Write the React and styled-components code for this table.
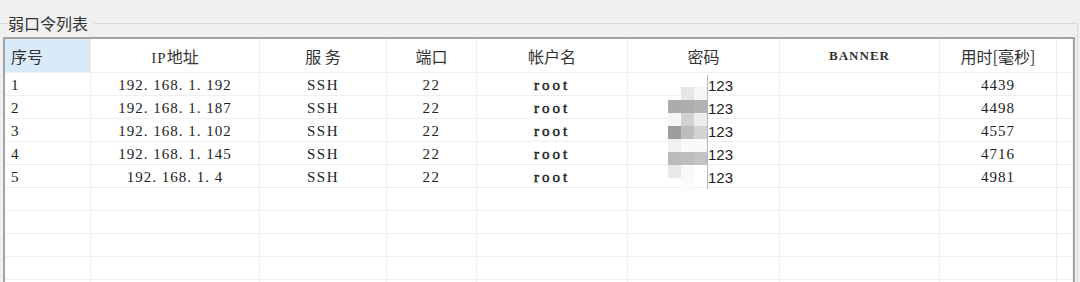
import React from "react";
import styled, { createGlobalStyle } from "styled-components";

const GlobalStyle = createGlobalStyle`
  html, body {
    margin: 0;
    padding: 0;
    background: #f0f0f0;
    overflow: hidden;
  }
  body {
    font-family: "Noto Sans CJK SC", "Noto Sans", sans-serif;
  }
`;

const COLS = "86px 169px 127px 90px 151px 152px 160px 117px 16px";

const Group = styled.fieldset`
  margin: 12px 2px 0 0;
  padding: 3px 0 0 3px;
  border: none;
  border-top: 1px solid #dadada;
  border-right: 1px solid #dadada;
  min-width: 0;
`;

const Title = styled.legend`
  padding: 0 6px 0 0;
  margin-left: 5px;
  font-size: 16px;
  line-height: 22px;
  color: #333;
`;

const TableBox = styled.div`
  position: relative;
  width: 1068px;
  background: #fff;
  border: 2px solid #a3a3a3;
  border-bottom: none;
  height: 260px;
  overflow: hidden;
`;

const Row = styled.div`
  display: grid;
  grid-template-columns: ${COLS};
  height: ${(p) => (p.$head ? "33px" : "22px")};
  border-bottom: 1px solid #efefef;
`;

const Cell = styled.div`
  display: flex;
  align-items: center;
  justify-content: ${(p) => (p.$align === "left" ? "flex-start" : "center")};
  padding-left: ${(p) => (p.$align === "left" ? "6px" : "0")};
  padding-top: ${(p) => (p.$head ? "0" : "2px")};
  border-right: 1px solid #efefef;
  background: ${(p) => (p.$active ? "#d9eaf9" : "transparent")};
  white-space: pre;
  overflow: hidden;
`;

const HeadText = styled.span`
  font-size: 16px;
  color: #333;
  font-family: "Noto Sans CJK SC", sans-serif;
`;

const Latin = styled.span`
  font-family: "Liberation Serif", serif;
  font-size: ${(p) => p.$size || 15}px;
  letter-spacing: 1px;
  font-weight: ${(p) => (p.$bold ? 700 : 400)};
  color: #333;
`;

const Mono = styled.span`
  font-family: "Liberation Serif", "DejaVu Serif", serif;
  font-size: 15px;
  letter-spacing: ${(p) => p.$gap ?? 1.5}px;
  color: #222;
  -webkit-text-stroke: ${(p) => (p.$heavy ? "0.5px #222" : "0")};
`;

const Pass = styled.span`
  font-family: "Liberation Sans", Arial, sans-serif;
  font-size: 15px;
  color: #222;
  margin-left: 74px;
`;

const Mosaic = styled.div`
  position: absolute;
  left: 663px;
  top: 48px;
  display: grid;
  grid-template-columns: repeat(3, 13px);
  grid-auto-rows: 13px;
`;

const Tile = styled.div`
  background: ${(p) => p.$c};
`;

const Caret = styled.div`
  position: absolute;
  left: 702px;
  top: 36px;
  width: 1px;
  height: 114px;
  background: #b8b8b8;
`;

const rows = [
  ["1", "192. 168. 1. 192", "4439"],
  ["2", "192. 168. 1. 187", "4498"],
  ["3", "192. 168. 1. 102", "4557"],
  ["4", "192. 168. 1. 145", "4716"],
  ["5", "192. 168. 1. 4", "4981"],
];

const tiles = [
  ["transparent", "#e6e6e6", "#f6f6f6"],
  ["#ababab", "#adadad", "#b2b2b2"],
  ["#f6f6f6", "#d0d0d0", "#ececec"],
  ["#9d9d9d", "#bdbdbd", "#d3d3d3"],
  ["#f1f1f1", "#fafafa", "#fafafa"],
  ["#bbbbbb", "#bdbdbd", "#c3c3c3"],
  ["#e9e9e9", "#f8f8f8", "transparent"],
  ["transparent", "#fafafa", "transparent"],
];

export default function App() {
  return (
    <>
      <GlobalStyle />
      <Group>
        <Title>弱口令列表</Title>
        <TableBox>
          <Row $head>
            <Cell $head $align="left" $active>
              <HeadText>序号</HeadText>
            </Cell>
            <Cell $head>
              <HeadText>
                <Latin>IP</Latin>地址
              </HeadText>
            </Cell>
            <Cell $head>
              <HeadText>服 务</HeadText>
            </Cell>
            <Cell $head>
              <HeadText>端口</HeadText>
            </Cell>
            <Cell $head>
              <HeadText>帐户名</HeadText>
            </Cell>
            <Cell $head>
              <HeadText>密码</HeadText>
            </Cell>
            <Cell $head>
              <Latin $bold $size={13}>BANNER</Latin>
            </Cell>
            <Cell $head>
              <HeadText>用时[毫秒]</HeadText>
            </Cell>
            <Cell $head />
          </Row>
          {rows.map(([n, ip, ms]) => (
            <Row key={n}>
              <Cell $align="left">
                <Mono $gap={0}>{n}</Mono>
              </Cell>
              <Cell>
                <Mono $gap={1}>{ip}</Mono>
              </Cell>
              <Cell>
                <Mono>SSH</Mono>
              </Cell>
              <Cell>
                <Mono>22</Mono>
              </Cell>
              <Cell>
                <Mono $heavy $gap={3}>root</Mono>
              </Cell>
              <Cell $align="left">
                <Pass>123</Pass>
              </Cell>
              <Cell />
              <Cell>
                <Mono $gap={1}>{ms}</Mono>
              </Cell>
              <Cell />
            </Row>
          ))}
          {[0, 1, 2, 3, 4].map((i) => (
            <Row key={"e" + i}>
              {Array.from({ length: 9 }).map((_, j) => (
                <Cell key={j} />
              ))}
            </Row>
          ))}
          <Caret />
          <Mosaic>
            {tiles.flat().map((c, i) => (
              <Tile key={i} $c={c} />
            ))}
          </Mosaic>
        </TableBox>
      </Group>
    </>
  );
}
